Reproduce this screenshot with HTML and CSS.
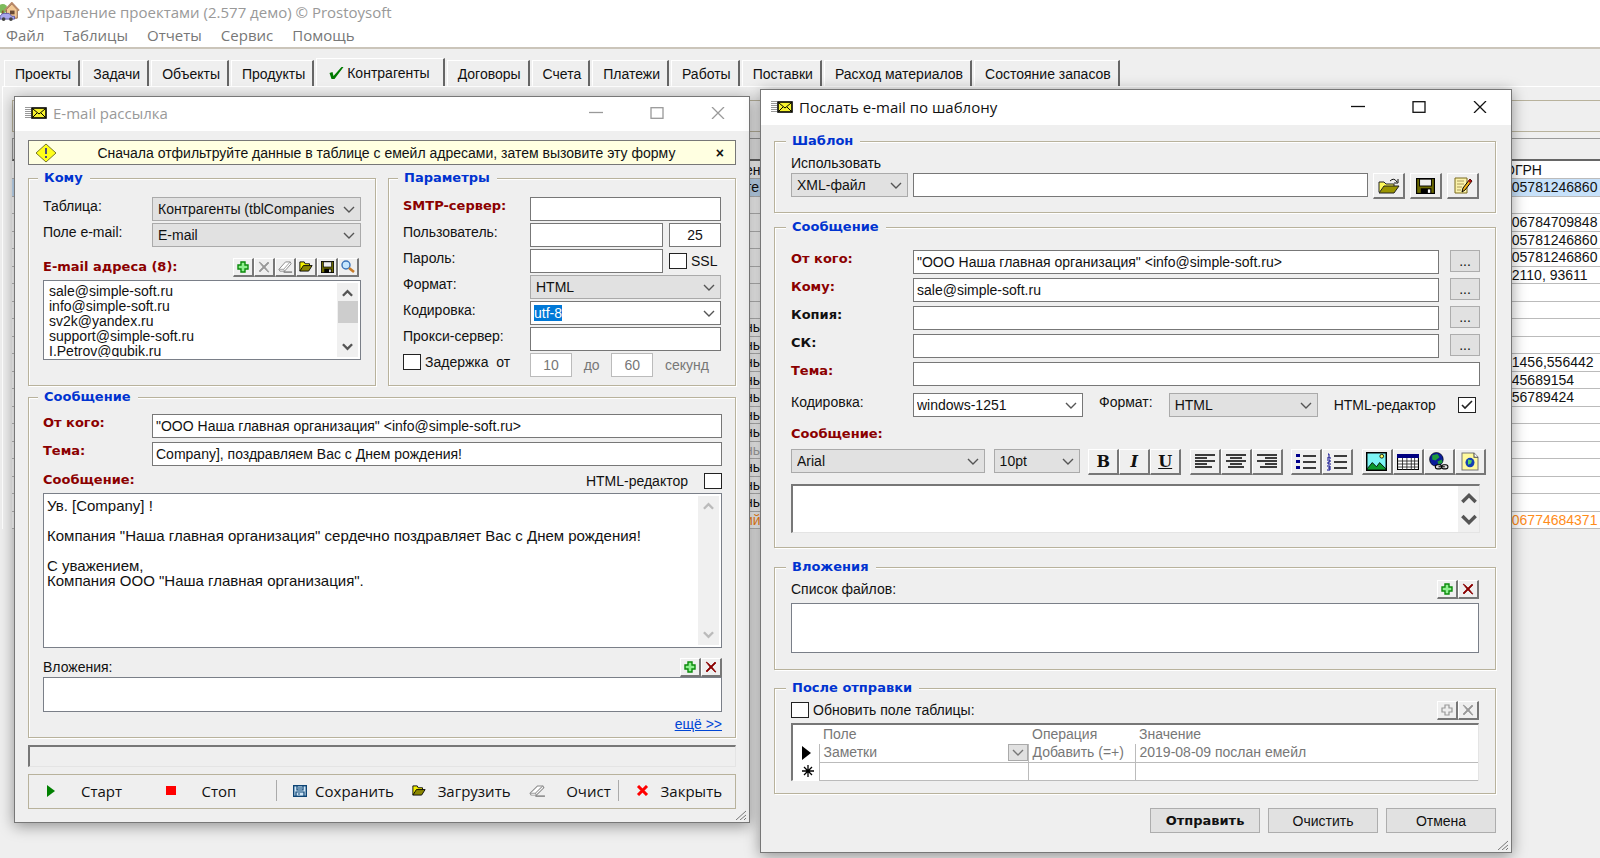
FILE: index.html
```html
<!DOCTYPE html>
<html lang="ru">
    <head>
        <meta charset="UTF-8" />
        <meta name="viewport" content="width=device-width, initial-scale=1.0" />
        <title>Управление проектами</title>
        <link rel="stylesheet" href="styles.css">
    </head>

    <body>
        <!-- icon sprite -->
        <svg class="sprite" aria-hidden="true">
            <symbol id="chevron" viewBox="0 0 12 7"><path d="M1 1l5 5 5-5" fill="none" stroke="currentColor" stroke-width="1.4" /></symbol>
            <symbol id="arrow-up" viewBox="0 0 12 8"><path d="M1 7l5-5 5 5" fill="none" stroke="currentColor" stroke-width="2.6" /></symbol>
            <symbol id="arrow-down" viewBox="0 0 12 8"><path d="M1 1l5 5 5-5" fill="none" stroke="currentColor" stroke-width="2.6" /></symbol>
            <symbol id="house" viewBox="0 0 22 20" preserveAspectRatio="none">
                <circle cx="3" cy="7" r="5" fill="#7dbb5c" />
                <rect x="2" y="9" width="2" height="7" fill="#8a5a2b" />
                <path d="M7 8l6-6 6 6v9H7z" fill="#f3c995" stroke="#8a5a3b" />
                <path d="M5 9l8-8 8 8" fill="none" stroke="#b98a6b" stroke-width="2" />
                <rect x="11" y="9" width="5" height="4" fill="#6b4a35" />
                <path d="M0 15l3-3h7l3 3h3v3H0z" fill="#a9a6ee" stroke="#5b58a8" />
                <circle cx="4" cy="18" r="2" fill="#444" /><circle cx="12" cy="18" r="2" fill="#444" />
            </symbol>
            <symbol id="mail" viewBox="0 0 22 12" preserveAspectRatio="none">
                <path d="M1 0v11M3 0v11M5 0v11" stroke="#333" stroke-width="1" stroke-dasharray="1 1" />
                <rect x="7" y="1" width="14" height="10" fill="#f7f32e" stroke="#000" stroke-width="1.6" />
                <path d="M8 2l6 5 6-5M8 10l4-4M20 10l-4-4" fill="none" stroke="#000" />
            </symbol>
            <symbol id="warn" viewBox="0 0 22 20" preserveAspectRatio="none">
                <path d="M11 1l10 9-10 9L1 10z" fill="#ffff1a" stroke="#77772a" />
                <path d="M11 5v6M11 13v2" stroke="#4c4c80" stroke-width="2" />
            </symbol>
            <symbol id="check" viewBox="0 0 14 14"><path d="M0 7l3-1 1 4L12 1l2 0L5 13H2z" fill="#007a00" /></symbol>
            <symbol id="tick" viewBox="0 0 14 12"><path d="M2 6l3 3 7-7" fill="none" stroke="#222" stroke-width="1.6" /></symbol>
            <symbol id="plus" viewBox="0 0 12 12"><path d="M4 1h4v3h3v4H8v3H4V8H1V4h3z" fill="#8ff08f" stroke="#0a8a0a" stroke-width="1.4" /></symbol>
            <symbol id="plus-off" viewBox="0 0 12 12"><path d="M4 1h4v3h3v4H8v3H4V8H1V4h3z" fill="#eee" stroke="#999" stroke-width="1.2" /></symbol>
            <symbol id="cross" viewBox="0 0 12 12"><path d="M1 1l2 1 3 3 4-4 1 1-4 4 4 5-1 0-4-4-4 4-1-1 4-4z" fill="currentColor" stroke="currentColor" stroke-width=".7" /></symbol>
            <symbol id="eraser" viewBox="0 0 16 13" preserveAspectRatio="none">
                <path d="M1 9l7-8h5l1 2-7 8H2z" fill="#fff" stroke="#888" />
                <path d="M1 9h5l1 2M6 9l7-8" fill="none" stroke="#999" /><path d="M6 12h9" stroke="#444" />
            </symbol>
            <symbol id="folder" viewBox="0 0 16 12" preserveAspectRatio="none">
                <path d="M1 11V1h5l1 2h5v2" fill="#f4f000" stroke="#000" />
                <path d="M1 11l4-6h10l-4 6z" fill="#8a8600" stroke="#000" />
            </symbol>
            <symbol id="folder-open" viewBox="0 0 22 16" preserveAspectRatio="none">
                <path d="M1 14V4h5l2 2h8v3" fill="#fdf95a" stroke="#222" />
                <path d="M1 15l5-7h15l-5 7z" fill="#9a9500" stroke="#222" />
                <path d="M12 3q4-4 7 1M20 1v4h-4" fill="none" stroke="#111" />
            </symbol>
            <symbol id="floppy" viewBox="0 0 16 14" preserveAspectRatio="none">
                <rect x=".5" y=".5" width="15" height="13" fill="#6b6900" stroke="#000" />
                <rect x="3" y="1" width="10" height="6" fill="#eee" stroke="#000" stroke-width=".8" />
                <rect x="4" y="9" width="9" height="5" fill="#000" /><rect x="10" y="10" width="2" height="3" fill="#fff" />
            </symbol>
            <symbol id="floppy-blue" viewBox="0 0 14 12" preserveAspectRatio="none">
                <rect x=".7" y=".7" width="12.6" height="10.6" fill="#cfe6f7" stroke="#0d4474" stroke-width="1.4" />
                <path d="M4 1v4h6V1M3 11V7h8v4M5 3h4M5 9h2" fill="none" stroke="#0d4474" stroke-width="1.2" />
            </symbol>
            <symbol id="lens" viewBox="0 0 16 13" preserveAspectRatio="none">
                <circle cx="6" cy="5" r="4" fill="#c5e6ff" stroke="#3a72b8" stroke-width="1.4" />
                <path d="M9 8l5 4" stroke="#c77b28" stroke-width="2.6" />
            </symbol>
            <symbol id="note" viewBox="0 0 20 18" preserveAspectRatio="none">
                <path d="M2 1h12v15H2z" fill="#fbf3ac" stroke="#7a6a1c" />
                <path d="M4 4h7M4 7h7M4 10h5M4 13h4" stroke="#a8985a" />
                <path d="M17 2l2 2-7 9-3 2 1-4z" fill="#f2b51c" stroke="#000" /><path d="M17 2l2 2-2 2-2-2z" fill="#b01010" />
            </symbol>
            <symbol id="al-left" viewBox="0 0 20 15"><path d="M0 1h20M0 4h12M0 7h20M0 10h12M0 13h17" stroke="#000" stroke-width="1.3" /></symbol>
            <symbol id="al-center" viewBox="0 0 20 15"><path d="M0 1h20M4 4h12M0 7h20M4 10h12M2 13h16" stroke="#000" stroke-width="1.3" /></symbol>
            <symbol id="al-right" viewBox="0 0 20 15"><path d="M0 1h20M8 4h12M0 7h20M8 10h12M3 13h17" stroke="#000" stroke-width="1.3" /></symbol>
            <symbol id="bullets" viewBox="0 0 20 17">
                <path d="M7 3h13M7 9h13M7 15h13" stroke="#000" stroke-width="1.3" />
                <path d="M0 1h4v3H0zM0 7h4v3H0zM0 13h4v3H0z" fill="#00008b" />
            </symbol>
            <symbol id="numbers" viewBox="0 0 20 18">
                <path d="M7 3h13M7 9h13M7 15h13" stroke="#000" stroke-width="1.3" />
                <path d="M1 1h1v4M0 5h4M0 7h3v2H1v2h3M0 13h3v2H1M3 15v2H0" fill="none" stroke="#00008b" />
            </symbol>
            <symbol id="picture" viewBox="0 0 20 18" preserveAspectRatio="none">
                <rect x=".7" y=".7" width="18.6" height="16.6" fill="#7cf4f4" stroke="#000" stroke-width="1.4" />
                <circle cx="15" cy="4" r="1.8" fill="#ff5" stroke="#000" stroke-width=".8" />
                <path d="M1 16l5-6 4 4 3-4 6 6v1H1z" fill="#0c9a2c" stroke="#000" stroke-width=".8" />
            </symbol>
            <symbol id="grid" viewBox="0 0 20 16" preserveAspectRatio="none">
                <rect x=".5" y=".5" width="19" height="15" fill="#fff" stroke="#000" /><rect width="20" height="4" fill="#000080" />
                <path d="M1 7h18M1 10h18M1 13h18M5 4v12M9 4v12M13 4v12M16 4v12" stroke="#222" stroke-width=".8" />
            </symbol>
            <symbol id="globe" viewBox="0 0 20 18" preserveAspectRatio="none">
                <circle cx="8" cy="7" r="6.5" fill="#0a1c9a" stroke="#000" stroke-width=".6" />
                <path d="M4 3l5-1 2 3-4 3-3-1zM9 9l4-2 1 3-4 2z" fill="#1c9a3c" />
                <rect x="7" y="12" width="6" height="4" rx="2" fill="#ddd" stroke="#000" /><rect x="13" y="12" width="6" height="4" rx="2" fill="#ddd" stroke="#000" /><path d="M10 14h6" stroke="#000" />
            </symbol>
            <symbol id="webpage" viewBox="0 0 18 18" preserveAspectRatio="none">
                <path d="M1 1h12l4 4v12H1z" fill="#fffa9c" stroke="#777" /><path d="M13 1v4h4" fill="#fff" stroke="#444" />
                <circle cx="9" cy="10" r="4.5" fill="#1440b4" /><path d="M7 7l4 1-1 3-3 1z" fill="#5ad65a" />
            </symbol>
            <symbol id="grip" viewBox="0 0 12 10"><path d="M1 10L11 1M5 10l6-5M9 10l2-2" stroke="#777" fill="none" /></symbol>
            <symbol id="w-min" viewBox="0 0 14 12"><path d="M0 5.5h14" stroke="currentColor" stroke-width="1.3" /></symbol>
            <symbol id="w-max" viewBox="0 0 14 12"><rect x="1" y=".7" width="12" height="10.6" fill="none" stroke="currentColor" stroke-width="1.3" /></symbol>
            <symbol id="w-close" viewBox="0 0 14 12"><path d="M1 0l12 12M13 0L1 12" stroke="currentColor" stroke-width="1.3" /></symbol>
        </svg>

        <header class="app-head">
            <div class="app-title"><svg class="app-icon"><use href="#house" /></svg>Управление проектами (2.577 демо) © Prostoysoft</div>
            <nav class="menu">
                <button>Файл</button><button>Таблицы</button><button>Отчеты</button><button>Сервис</button><button>Помощь</button>
            </nav>
        </header>

        <nav class="tabs">
            <button>Проекты</button><button>Задачи</button><button>Объекты</button><button>Продукты</button>
            <button class="active"><svg width="15" height="14"><use href="#check" /></svg>Контрагенты</button>
            <button>Договоры</button><button>Счета</button><button>Платежи</button><button>Работы</button>
            <button>Поставки</button><button>Расход материалов</button><button>Состояние запасов</button>
        </nav>

        <main class="pane">
            <div class="strip"></div>
            <div class="strip-low"></div>
            <table class="data">
                <colgroup><col class="c-hidden" /><col /><col class="c-ogrn" /></colgroup>
                <tr><th></th><th>ен</th><th>ОГРН</th></tr>
                <tr class="sel"><td></td><td>те</td><td>105781246860</td></tr>
                <tr><td></td><td></td><td></td></tr>
                <tr><td></td><td></td><td>106784709848</td></tr>
                <tr><td></td><td></td><td>105781246860</td></tr>
                <tr><td></td><td></td><td>105781246860</td></tr>
                <tr><td></td><td></td><td>92110, 93611</td></tr>
                <tr><td></td><td></td><td></td></tr>
                <tr><td></td><td></td><td></td></tr>
                <tr><td></td><td>нь</td><td></td></tr>
                <tr><td></td><td>нь</td><td></td></tr>
                <tr><td></td><td>нь</td><td>01456,556442</td></tr>
                <tr><td></td><td>нь</td><td>345689154</td></tr>
                <tr><td></td><td>нь</td><td>356789424</td></tr>
                <tr><td></td><td>нь</td><td></td></tr>
                <tr><td></td><td>нь</td><td></td></tr>
                <tr class="dim"><td></td><td>нь</td><td></td></tr>
                <tr><td></td><td>нь</td><td></td></tr>
                <tr><td></td><td>нь</td><td></td></tr>
                <tr><td></td><td>нь</td><td></td></tr>
                <tr class="orange"><td></td><td>ий</td><td>106774684371</td></tr>
            </table>
        </main>

        <!-- mass mailing window -->
        <section class="window mailing">
            <div class="titlebar">
                <svg width="22" height="12"><use href="#mail" /></svg>
                <span class="caption">E-mail рассылка</span>
                <button aria-label="Свернуть"><svg width="14" height="12"><use href="#w-min" /></svg></button>
                <button aria-label="Развернуть"><svg width="14" height="12"><use href="#w-max" /></svg></button>
                <button aria-label="Закрыть окно"><svg width="14" height="12"><use href="#w-close" /></svg></button>
            </div>
            <div class="window-body">
                <div class="notice">
                    <svg width="22" height="20"><use href="#warn" /></svg>
                    <span>Сначала отфильтруйте данные в таблице с емейл адресами, затем вызовите эту форму</span>
                    <button aria-label="Скрыть">×</button>
                </div>

                <div class="two-cols">
                    <fieldset>
                        <legend>Кому</legend>
                        <div class="rows rows-to">
                            <label for="tbl">Таблица:</label>
                            <span class="combo"><select id="tbl"><option>Контрагенты (tblCompanies)</option></select><svg><use href="#chevron" /></svg></span>
                            <label for="fld">Поле e-mail:</label>
                            <span class="combo"><select id="fld"><option>E-mail</option></select><svg><use href="#chevron" /></svg></span>
                        </div>
                        <div class="bar bar-list">
                            <label class="req" for="addr">E-mail адреса (8):</label>
                            <span class="tools">
                                <button class="mini" aria-label="Добавить"><svg width="12" height="12"><use href="#plus" /></svg></button>
                                <button class="mini off" aria-label="Удалить" disabled><svg width="12" height="12"><use href="#cross" /></svg></button>
                                <button class="mini" aria-label="Очистить список"><svg width="15" height="12"><use href="#eraser" /></svg></button>
                                <button class="mini" aria-label="Открыть"><svg width="14" height="11"><use href="#folder" /></svg></button>
                                <button class="mini" aria-label="Сохранить список"><svg width="13" height="12"><use href="#floppy" /></svg></button>
                                <button class="mini" aria-label="Найти"><svg width="16" height="13"><use href="#lens" /></svg></button>
                            </span>
                        </div>
                        <div class="box list">
                            <select id="addr" size="5">
                                <option>sale@simple-soft.ru</option>
                                <option>info@simple-soft.ru</option>
                                <option>sv2k@yandex.ru</option>
                                <option>support@simple-soft.ru</option>
                                <option>I.Petrov@qubik.ru</option>
                            </select>
                            <div class="scroll"><svg><use href="#arrow-up" /></svg><i class="thumb"></i><svg><use href="#arrow-down" /></svg></div>
                        </div>
                    </fieldset>

                    <fieldset>
                        <legend>Параметры</legend>
                        <div class="rows rows-smtp">
                            <label class="req" for="smtp">SMTP-сервер:</label>
                            <input id="smtp" type="text" />
                            <label for="user">Пользователь:</label>
                            <span class="pair"><input id="user" type="text" /><input class="port" type="text" value="25" aria-label="Порт" /></span>
                            <label for="pass">Пароль:</label>
                            <span class="pair"><input id="pass" type="text" /><label class="check port"><input type="checkbox" />SSL</label></span>
                            <label for="fmt">Формат:</label>
                            <span class="combo"><select id="fmt"><option>HTML</option></select><svg><use href="#chevron" /></svg></span>
                            <label for="enc">Кодировка:</label>
                            <span class="combo"><input id="enc" type="text" value="utf-8" /><svg><use href="#chevron" /></svg></span>
                            <label for="proxy">Прокси-сервер:</label>
                            <input id="proxy" type="text" />
                            <label class="check"><input type="checkbox" />Задержка&nbsp; от</label>
                            <span class="delay"><input type="text" value="10" disabled aria-label="от" /><span>до</span><input type="text" value="60" disabled aria-label="до" /><span>секунд</span></span>
                        </div>
                    </fieldset>
                </div>

                <fieldset class="message">
                    <legend>Сообщение</legend>
                    <div class="rows rows-msg">
                        <label class="req" for="from">От кого:</label>
                        <input id="from" type="text" value='"ООО Наша главная организация" &lt;info@simple-soft.ru&gt;' />
                        <label class="req" for="subj">Тема:</label>
                        <input id="subj" type="text" value="Company], поздравляем Вас с Днем рождения!" />
                    </div>
                    <div class="bar bar-html">
                        <label class="req" for="text">Сообщение:</label>
                        <label class="check rev">HTML-редактор<input type="checkbox" /></label>
                    </div>
                    <div class="box text">
                        <textarea id="text">Ув. [Company] !

Компания "Наша главная организация" сердечно поздравляет Вас с Днем рождения!

С уважением,
Компания ООО "Наша главная организация".</textarea>
                        <div class="scroll off"><svg><use href="#arrow-up" /></svg><svg><use href="#arrow-down" /></svg></div>
                    </div>
                    <div class="bar bar-files">
                        <label for="files">Вложения:</label>
                        <span class="tools">
                            <button class="mini" aria-label="Добавить"><svg width="12" height="12"><use href="#plus" /></svg></button>
                            <button class="mini red" aria-label="Удалить"><svg width="12" height="12"><use href="#cross" /></svg></button>
                        </span>
                    </div>
                    <textarea id="files" class="files"></textarea>
                    <a class="more" href="#">ещё &gt;&gt;</a>
                </fieldset>

                <div class="progress"></div>

                <div class="actions">
                    <button class="a-start"><svg width="9" height="12" viewBox="0 0 9 12"><path d="M1 0l8 6-8 6z" fill="#008000" /></svg>Старт</button>
                    <button class="a-stop"><svg width="10" height="9" viewBox="0 0 10 9"><rect width="10" height="9" fill="#f00" /></svg>Стоп</button>
                    <i class="sep"></i>
                    <button class="a-save"><svg width="14" height="12"><use href="#floppy-blue" /></svg>Сохранить</button>
                    <button class="a-load"><svg width="14" height="11"><use href="#folder" /></svg>Загрузить</button>
                    <button class="a-clear"><svg width="17" height="12"><use href="#eraser" /></svg>Очист</button>
                    <i class="sep"></i>
                    <button class="a-close"><svg width="13" height="11" viewBox="0 0 13 11"><path d="M2 1l9 9M11 1l-9 9" stroke="#f00" stroke-width="3" /></svg>Закрыть</button>
                </div>
            </div>
            <svg class="grip"><use href="#grip" /></svg>
        </section>

        <!-- template mail window -->
        <section class="window template">
            <div class="titlebar">
                <svg width="22" height="12"><use href="#mail" /></svg>
                <span class="caption">Послать e-mail по шаблону</span>
                <button aria-label="Свернуть"><svg width="14" height="12"><use href="#w-min" /></svg></button>
                <button aria-label="Развернуть"><svg width="14" height="12"><use href="#w-max" /></svg></button>
                <button aria-label="Закрыть окно"><svg width="14" height="12"><use href="#w-close" /></svg></button>
            </div>
            <div class="window-body">
                <fieldset class="f-tpl">
                    <legend>Шаблон</legend>
                    <label for="use">Использовать</label>
                    <div class="tpl-row">
                        <span class="combo"><select id="use"><option>XML-файл</option></select><svg><use href="#chevron" /></svg></span>
                        <input type="text" aria-label="Файл шаблона" />
                        <button class="tool" aria-label="Открыть"><svg width="22" height="16"><use href="#folder-open" /></svg></button>
                        <button class="tool" aria-label="Сохранить шаблон"><svg width="19" height="16"><use href="#floppy" /></svg></button>
                        <button class="tool" aria-label="Изменить"><svg width="20" height="18"><use href="#note" /></svg></button>
                    </div>
                </fieldset>

                <fieldset class="f-msg">
                    <legend>Сообщение</legend>
                    <div class="rows rows-send">
                        <label class="req" for="t-from">От кого:</label>
                        <input id="t-from" type="text" value='"ООО Наша главная организация" &lt;info@simple-soft.ru&gt;' /><button class="dots">...</button>
                        <label class="req" for="t-to">Кому:</label>
                        <input id="t-to" type="text" value="sale@simple-soft.ru" /><button class="dots">...</button>
                        <label class="bold" for="t-cc">Копия:</label>
                        <input id="t-cc" type="text" /><button class="dots">...</button>
                        <label class="bold" for="t-bcc">СК:</label>
                        <input id="t-bcc" type="text" /><button class="dots">...</button>
                        <label class="req" for="t-subj">Тема:</label>
                        <input id="t-subj" class="wide" type="text" />
                    </div>
                    <div class="enc-row">
                        <label class="enc-label" for="t-enc">Кодировка:</label>
                        <span class="combo white"><select id="t-enc"><option>windows-1251</option></select><svg><use href="#chevron" /></svg></span>
                        <label for="t-fmt">Формат:</label>
                        <span class="combo fmt"><select id="t-fmt"><option>HTML</option></select><svg><use href="#chevron" /></svg></span>
                        <label class="check rev">HTML-редактор<span class="ticked"><input type="checkbox" checked /><svg><use href="#tick" /></svg></span></label>
                    </div>
                    <label class="req msg-label" for="t-text">Сообщение:</label>
                    <div class="editor-bar">
                        <span class="combo font"><select aria-label="Шрифт"><option>Arial</option></select><svg><use href="#chevron" /></svg></span>
                        <span class="combo size"><select aria-label="Размер"><option>10pt</option></select><svg><use href="#chevron" /></svg></span>
                        <span class="group">
                            <button class="tool"><b>B</b></button><button class="tool"><b><em>I</em></b></button><button class="tool"><b><u>U</u></b></button>
                        </span>
                        <span class="group">
                            <button class="tool" aria-label="Влево"><svg width="20" height="15"><use href="#al-left" /></svg></button>
                            <button class="tool" aria-label="По центру"><svg width="20" height="15"><use href="#al-center" /></svg></button>
                            <button class="tool" aria-label="Вправо"><svg width="20" height="15"><use href="#al-right" /></svg></button>
                        </span>
                        <span class="group">
                            <button class="tool" aria-label="Маркеры"><svg width="20" height="17"><use href="#bullets" /></svg></button>
                            <button class="tool" aria-label="Нумерация"><svg width="20" height="18"><use href="#numbers" /></svg></button>
                        </span>
                        <span class="group">
                            <button class="tool" aria-label="Рисунок"><svg width="21" height="19"><use href="#picture" /></svg></button>
                            <button class="tool" aria-label="Таблица"><svg width="22" height="16"><use href="#grid" /></svg></button>
                            <button class="tool" aria-label="Ссылка"><svg width="21" height="19"><use href="#globe" /></svg></button>
                            <button class="tool" aria-label="Страница"><svg width="18" height="19"><use href="#webpage" /></svg></button>
                        </span>
                    </div>
                    <div class="box sunken">
                        <textarea id="t-text"></textarea>
                        <div class="scroll big"><svg><use href="#arrow-up" /></svg><svg><use href="#arrow-down" /></svg></div>
                    </div>
                </fieldset>

                <fieldset class="f-files">
                    <legend>Вложения</legend>
                    <div class="bar">
                        <label for="t-files">Список файлов:</label>
                        <span class="tools">
                            <button class="mini" aria-label="Добавить"><svg width="12" height="12"><use href="#plus" /></svg></button>
                            <button class="mini red" aria-label="Удалить"><svg width="12" height="12"><use href="#cross" /></svg></button>
                        </span>
                    </div>
                    <textarea id="t-files" class="files"></textarea>
                </fieldset>

                <fieldset class="f-after">
                    <legend>После отправки</legend>
                    <div class="bar">
                        <label class="check"><input type="checkbox" />Обновить поле таблицы:</label>
                        <span class="tools">
                            <button class="mini off" aria-label="Добавить" disabled><svg width="12" height="12"><use href="#plus-off" /></svg></button>
                            <button class="mini off" aria-label="Удалить" disabled><svg width="12" height="12"><use href="#cross" /></svg></button>
                        </span>
                    </div>
                    <div class="sheet-wrap">
                        <table class="sheet">
                            <colgroup><col class="s-mark" /><col class="s-field" /><col class="s-op" /><col /></colgroup>
                            <tr><th></th><th>Поле</th><th>Операция</th><th>Значение</th></tr>
                            <tr>
                                <td class="mark"><svg width="9" height="14" viewBox="0 0 9 14"><path d="M0 0l9 7-9 7z" fill="#000" /></svg></td>
                                <td><span class="drop">Заметки<button aria-label="Выбрать поле"><svg><use href="#chevron" /></svg></button></span></td>
                                <td>Добавить (=+)</td>
                                <td>2019-08-09 послан емейл</td>
                            </tr>
                            <tr>
                                <td class="mark"><svg width="12" height="12" viewBox="0 0 12 12"><path d="M6 0v12M0 6h12M2 2l8 8M10 2l-8 8" stroke="#000" stroke-width="1.3" /></svg></td>
                                <td></td><td></td><td></td>
                            </tr>
                        </table>
                    </div>
                </fieldset>

                <div class="buttons">
                    <button class="bold">Отправить</button>
                    <button>Очистить</button>
                    <button>Отмена</button>
                </div>
            </div>
            <svg class="grip"><use href="#grip" /></svg>
        </section>

        <script>
            // encoding is selected when the form opens
            const enc = document.querySelector("#enc");
            enc.focus();
            enc.select();
        </script>
    </body>
</html>
```
FILE: styles.css
```css
* {
    box-sizing: border-box;
}

body {
    margin: 0;
    min-height: 100vh;
    position: relative;
    overflow: hidden;
    background: #efefef;
    color: #111;
    font: 14px/18px "Liberation Sans", Arial, sans-serif;
}

button,
input,
select,
textarea {
    font: inherit;
    color: inherit;
    margin: 0;
    border-radius: 0;
    outline: none;
}

button {
    padding: 0;
    border: none;
    background: none;
}

svg {
    display: block;
    flex: none;
}

.sprite {
    position: absolute;
    width: 0;
    height: 0;
}

/* main window */

.app-head {
    height: 49px;
    background: #fff;
    border-bottom: 2px solid #cbc5ba;
    font-family: "Open Sans", "Noto Sans", sans-serif;
    font-size: 15px;
}

.app-title {
    display: flex;
    gap: 7px;
    height: 23px;
    align-items: center;
    color: #999;
}

.app-icon {
    width: 20px;
    height: 19px;
}

.menu {
    display: flex;
    gap: 19px;
    padding-left: 6px;
    height: 23px;
    color: #777;
}

.tabs {
    display: flex;
    align-items: flex-end;
    gap: 2px;
    padding: 9px 0 0 4px;
    height: 37px;
}

.tabs button {
    height: 26px;
    padding: 0 7px 0 10px;
    border-top: 1px solid #fff;
    border-left: 1px solid #fff;
    border-right: 2px solid #666;
}

.tabs .active {
    display: flex;
    align-items: center;
    gap: 3px;
    height: 28px;
    padding: 0 13px 0 12px;
}

.pane {
    border-top: 1px solid #fff;
    border-left: 1px solid #fff;
    margin-left: 2px;
    padding: 13px 0 0 9px;
}

.strip {
    height: 32px;
    border: 1px solid #b8b29c;
    border-right: none;
}

.strip-low {
    margin-top: 6px;
    height: 23px;
    border-top: 1px solid #999;
    border-left: 1px solid #999;
    border-bottom: 2px solid #666;
}

.data {
    table-layout: fixed;
    width: 100%;
    height: 368px;
    border-collapse: collapse;
    background: #fff;
    line-height: 16px;
}

.data th,
.data td {
    height: 17px;
    padding: 0;
    text-align: left;
    font-weight: normal;
    white-space: nowrap;
    overflow: hidden;
    border-bottom: 1px solid #bbb;
}

.c-hidden {
    width: 733px;
}

.c-ogrn {
    width: 96px;
}

.sel td {
    background: #c7e1fa;
}

.dim td {
    color: #aaa;
}

.orange td {
    color: #ff8c1a;
}

/* windows */

.window {
    position: absolute;
    background: #efefef;
    border: 1px solid #777;
    box-shadow: 0 3px 14px rgba(0, 0, 0, 0.4);
}

.mailing {
    left: 14px;
    top: 96px;
    width: 46%;
}

.template {
    left: 760px;
    top: 89px;
    width: 47%;
}

.titlebar {
    display: flex;
    align-items: center;
    height: 34px;
    padding: 0 1px 2px 10px;
    background: #fff;
    font-family: "Open Sans", "Noto Sans", sans-serif;
    font-size: 15px;
}

.template .titlebar {
    height: 35px;
}

.caption {
    flex: 1;
    padding-left: 6px;
}

.titlebar button {
    display: flex;
    justify-content: center;
    width: 61px;
}

.mailing .titlebar {
    color: #999;
}

.window-body {
    padding: 9px 13px 13px;
}

.template .window-body {
    padding: 8px 15px 19px 13px;
}

.grip {
    position: absolute;
    right: 2px;
    bottom: 2px;
    width: 12px;
    height: 10px;
}

fieldset {
    min-width: 0;
    margin: 0;
    padding: 0 14px;
    border: 1px solid #b8b29c;
    box-shadow: inset 1px 1px #fff, 1px 1px #fff;
}

legend {
    margin-left: -5px;
    padding: 0 7px 0 6px;
    background: #efefef;
    color: #0033d0;
    font: bold 13px/16px "DejaVu Sans", Verdana, sans-serif;
}

.req,
.bold {
    font-family: "DejaVu Sans", Verdana, sans-serif;
    font-size: 13px;
    font-weight: bold;
}

.req {
    color: #8b0000;
}

input[type="text"] {
    width: 100%;
    min-width: 0;
    height: 24px;
    padding: 0 3px;
    border: 1px solid #777;
    background: #fff;
}

input[type="text"]:disabled {
    color: #777;
    border-color: #bbb;
}

input::selection {
    background: #0078d7;
    color: #fff;
}

input[type="checkbox"] {
    appearance: none;
    flex: none;
    width: 18px;
    height: 16px;
    border: 1px solid #222;
    background: #fff;
}

.check {
    display: flex;
    align-items: center;
    gap: 4px;
    white-space: nowrap;
}

.check.rev {
    gap: 16px;
}

.ticked {
    position: relative;
}

.ticked input {
    display: block;
}

.ticked svg {
    position: absolute;
    left: 2px;
    top: 2px;
    width: 14px;
    height: 12px;
}

.combo {
    position: relative;
    display: block;
}

.combo select {
    appearance: none;
    display: block;
    width: 100%;
    height: 24px;
    padding: 0 26px 0 5px;
    border: 1px solid #aaa;
    background: #e1e1e1;
}

.combo svg {
    position: absolute;
    right: 6px;
    top: 9px;
    width: 12px;
    height: 7px;
    color: #555;
}

.combo.white select {
    padding-left: 3px;
    border-color: #777;
    background: #fff;
}

.rows {
    display: grid;
    gap: 2px 0;
    align-items: start;
}

.bar {
    display: flex;
    justify-content: space-between;
    align-items: center;
    height: 20px;
}

.tools {
    display: flex;
}

.mini {
    display: flex;
    align-items: center;
    justify-content: center;
    width: 21px;
    height: 19px;
    border: 1px solid #fff;
    border-right: 2px solid #777;
    border-bottom: 2px solid #777;
}

.mini.red {
    color: #8b0000;
}

.mini.off {
    color: #999;
}

.tool {
    display: flex;
    align-items: center;
    justify-content: center;
    width: 31px;
    height: 26px;
    border: 1px solid #fff;
    border-right: 2px solid #777;
    border-bottom: 2px solid #777;
}

.box {
    display: flex;
    border: 1px solid #7a7f88;
    background: #fff;
    padding: 2px;
}

.box textarea,
.box select {
    flex: 1;
    min-width: 0;
    padding: 0;
    border: none;
    background: none;
    resize: none;
    overflow: hidden;
}

.scroll {
    display: flex;
    flex-direction: column;
    justify-content: space-between;
    align-items: center;
    width: 21px;
    padding: 6px 0;
    background: #f0f0f0;
    color: #555;
}

.scroll svg {
    width: 11px;
    height: 8px;
}

.scroll.off {
    color: #bbb;
}

.thumb {
    width: 20px;
    height: 22px;
    margin-bottom: 16px;
    background: #cdcdcd;
}

.files {
    display: block;
    width: 100%;
    border: 1px solid #7a7f88;
    resize: none;
    background: #fff;
}

/* mailing window */

.notice {
    display: flex;
    align-items: center;
    height: 25px;
    margin-bottom: 5px;
    padding: 0 11px 0 6px;
    border: 1px solid #777;
    background: #ffffe1;
}

.notice span {
    flex: 1;
    text-align: center;
    white-space: nowrap;
}

.notice button {
    font-weight: bold;
}

.two-cols {
    display: grid;
    grid-template-columns: 1fr 1fr;
    gap: 12px;
    margin-bottom: 3px;
}

.two-cols fieldset {
    padding: 11px 14px 8px;
}

.rows-to {
    grid-template-columns: 109px 1fr;
}

.bar-list {
    margin: 10px 2px 3px 0;
}

.list {
    height: 80px;
}

.list select option {
    height: 15px;
    min-height: 0;
    padding: 0 3px;
    line-height: 15px;
}

.rows-smtp {
    grid-template-columns: 127px 1fr;
}

.pair {
    display: grid;
    grid-template-columns: 1fr 52px;
    gap: 6px;
}

input.port {
    text-align: center;
}

.delay {
    display: flex;
    justify-content: space-between;
    align-items: center;
    padding-right: 12px;
    color: #777;
}

.delay input[type="text"] {
    width: 42px;
    text-align: center;
}

.message {
    padding: 9px 13px 4px 14px;
}

.rows-msg {
    grid-template-columns: 109px 1fr;
    row-gap: 4px;
}

.bar-html {
    margin: 5px 0 2px;
}

.bar-html .req {
    align-self: flex-start;
}

.text {
    height: 155px;
}

.text textarea {
    font-size: 15px;
    line-height: 15px;
    padding: 2px 1px;
}

.bar-files {
    margin-top: 9px;
}

.message .files {
    height: 35px;
}

.more {
    display: block;
    margin: 3px 0 0;
    text-align: right;
    color: #0046d5;
}

.progress {
    margin-top: 7px;
    height: 22px;
    border: 1px solid #e4e4e4;
    border-top: 2px solid #777;
    border-left: 2px solid #777;
}

.actions {
    display: grid;
    grid-template-columns: 119fr 110fr 17fr 118fr 117fr 88fr 18fr 85fr;
    align-items: center;
    height: 35px;
    margin-top: 7px;
    padding: 0 14px 2px 17px;
    border: 1px solid #b8b29c;
    font-family: "Open Sans", "Noto Sans", sans-serif;
    font-size: 15px;
}

.actions button {
    display: flex;
    align-items: center;
    gap: 8px;
    min-width: 0;
}

.actions .a-start,
.actions .a-stop {
    gap: 26px;
}

.actions .a-load,
.actions .a-close {
    gap: 12px;
}

.actions .a-clear {
    gap: 20px;
}

.sep {
    width: 1px;
    height: 21px;
    background: #aaa;
}

/* template window */

.f-tpl {
    padding: 5px 16px 13px;
}

.tpl-row {
    display: grid;
    grid-template-columns: 117px 1fr 32px 32px 32px;
    gap: 5px;
    margin-top: 1px;
}

.tpl-row .tool {
    width: 32px;
}

.f-msg {
    margin-top: 6px;
    padding: 15px 15px 14px 16px;
}

.rows-send {
    grid-template-columns: 122px 1fr 30px;
    gap: 4px 0;
}

.rows-send .dots {
    height: 22px;
    line-height: 18px;
    border: 1px solid #adadad;
    background: #e1e1e1;
}

.rows-send input {
    justify-self: start;
}

.rows-send .wide {
    grid-column: 2 / 4;
}

.rows-send > input:not(.wide) {
    width: calc(100% - 11px);
}

.enc-row {
    display: flex;
    align-items: center;
    gap: 16px;
    margin-top: 7px;
}

.enc-row > label:not(.check) {
    align-self: flex-start;
}

.enc-label {
    width: 106px;
}

.enc-row .white {
    width: 170px;
}

.enc-row .fmt {
    width: 149px;
}

.enc-row .rev {
    gap: 22px;
}

.msg-label {
    display: block;
    margin: 8px 0 6px;
}

.editor-bar {
    display: flex;
    justify-content: space-between;
    margin-right: -6px;
}

.editor-bar .font {
    width: 194px;
}

.editor-bar .size {
    width: 86px;
}

.group {
    display: flex;
}

.group b {
    font: bold 16px/20px "DejaVu Serif", serif;
}

.sunken {
    height: 49px;
    margin-top: 9px;
    padding: 0;
    border: 1px solid #e4e4e4;
    border-top: 2px solid #777;
    border-left: 2px solid #777;
}

.scroll.big svg {
    width: 16px;
    height: 12px;
}

.f-files {
    margin-top: 11px;
    padding: 4px 16px 16px;
}

.f-files .files {
    height: 50px;
    margin-top: 4px;
}

.f-after {
    margin-top: 10px;
    padding: 4px 16px 12px;
}

.sheet-wrap {
    margin-top: 3px;
    height: 58px;
    border: 1px solid #e4e4e4;
    border-top: 2px solid #777;
    border-left: 2px solid #777;
}

.sheet {
    table-layout: fixed;
    width: 100%;
    border-collapse: collapse;
    background: #fff;
    line-height: 17px;
    color: #777;
}

.sheet th,
.sheet td {
    height: 18px;
    padding: 0 0 0 4px;
    text-align: left;
    font-weight: normal;
    white-space: nowrap;
    border: 0 solid #bbb;
}

.sheet th {
    height: 19px;
}

.sheet td {
    border-bottom-width: 1px;
    border-left-width: 1px;
}

.sheet .mark {
    border-width: 0;
    padding-left: 9px;
}

.s-mark {
    width: 26px;
}

.s-field {
    width: 209px;
}

.s-op {
    width: 107px;
}

.drop {
    display: flex;
    justify-content: space-between;
}

.drop button {
    width: 20px;
    height: 17px;
    border: 1px solid #aaa;
    background: #e1e1e1;
    display: flex;
    align-items: center;
    justify-content: center;
}

.drop svg {
    width: 12px;
    height: 7px;
}

.buttons {
    display: flex;
    justify-content: flex-end;
    gap: 8px;
    margin-top: 14px;
}

.buttons button {
    width: 110px;
    height: 25px;
    border: 1px solid #adadad;
    background: #e1e1e1;
}
```
